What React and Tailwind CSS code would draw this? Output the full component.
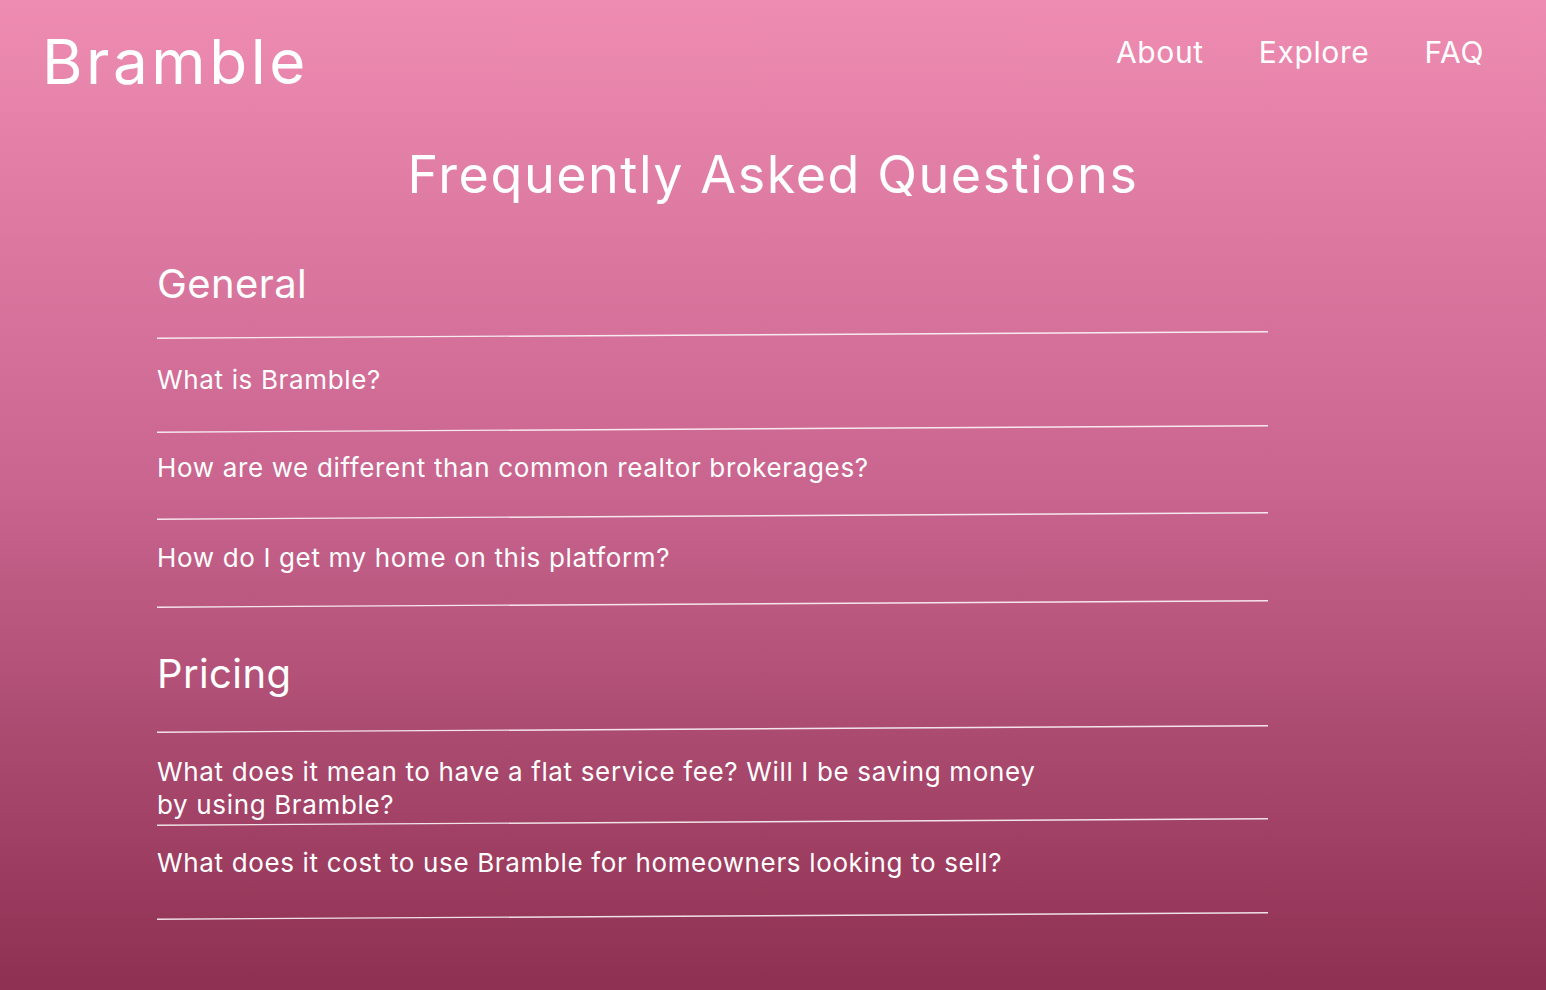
import React from "react";

const font = { fontFamily: "Inter, 'Noto Sans', sans-serif" };

// Slightly tilted divider, like the hand-placed lines in the design
function Divider({ className = "" }) {
  return (
    <svg className={`block ${className}`} width="1111" height="8" viewBox="0 0 1111 8">
      <line x1="0" y1="7.2" x2="1111" y2="0.8" stroke="rgba(255,255,255,0.85)" strokeWidth="1.4" />
    </svg>
  );
}

const general = [
  { q: "What is Bramble?", cls: "mt-[24px] mb-[29px]" },
  { q: "How are we different than common realtor brokerages?", cls: "mt-[18px] mb-[28px]" },
  { q: "How do I get my home on this platform?", cls: "mt-[21px] mb-[26px]" },
];

const pricing = [
  {
    q: "What does it mean to have a flat service fee? Will I be saving money by using Bramble?",
    cls: "mt-[22px] -mb-[3px]",
  },
  { q: "What does it cost to use Bramble for homeowners looking to sell?", cls: "mt-[20px] mb-[33px]" },
];

function Section({ title, items, className = "", lineGap = "mt-[23px]" }) {
  return (
    <div className={className}>
      <h2 className="text-[40px] leading-[48px] font-normal tracking-[0.01em] text-white">{title}</h2>
      <Divider className={lineGap} />
      {items.map((item) => (
        <div key={item.q}>
          <p className={`w-[890px] text-[26px] leading-[33px] tracking-[0.025em] text-white ${item.cls}`}>
            {item.q}
          </p>
          <Divider />
        </div>
      ))}
    </div>
  );
}

export default function App() {
  return (
    <div
      className="min-h-screen w-full bg-linear-to-b from-[#ef8cb2] via-[#c8648e] to-[#8e3052] text-white"
      style={font}
    >
      {/* Header */}
      <header className="flex justify-between items-start pl-[42px] pr-[62px] pt-[31px]">
        <div className="text-[62px] leading-none font-normal tracking-[0.057em]">Bramble</div>
        <nav className="flex gap-[55px] mt-[6px] text-[30px] leading-none tracking-[0.021em]">
          <a href="#">About</a>
          <a href="#">Explore</a>
          <a href="#">FAQ</a>
        </nav>
      </header>

      {/* Title */}
      <h1 className="mt-[56px] text-center text-[52px] leading-none font-normal tracking-[0.03em]">
        Frequently Asked Questions
      </h1>

      <main className="ml-[157px] w-[1111px] mt-[59px] pb-[60px]">
        <Section title="General" items={general} />
        <Section title="Pricing" items={pricing} className="mt-[42px]" lineGap="mt-[27px]" />
      </main>
    </div>
  );
}
